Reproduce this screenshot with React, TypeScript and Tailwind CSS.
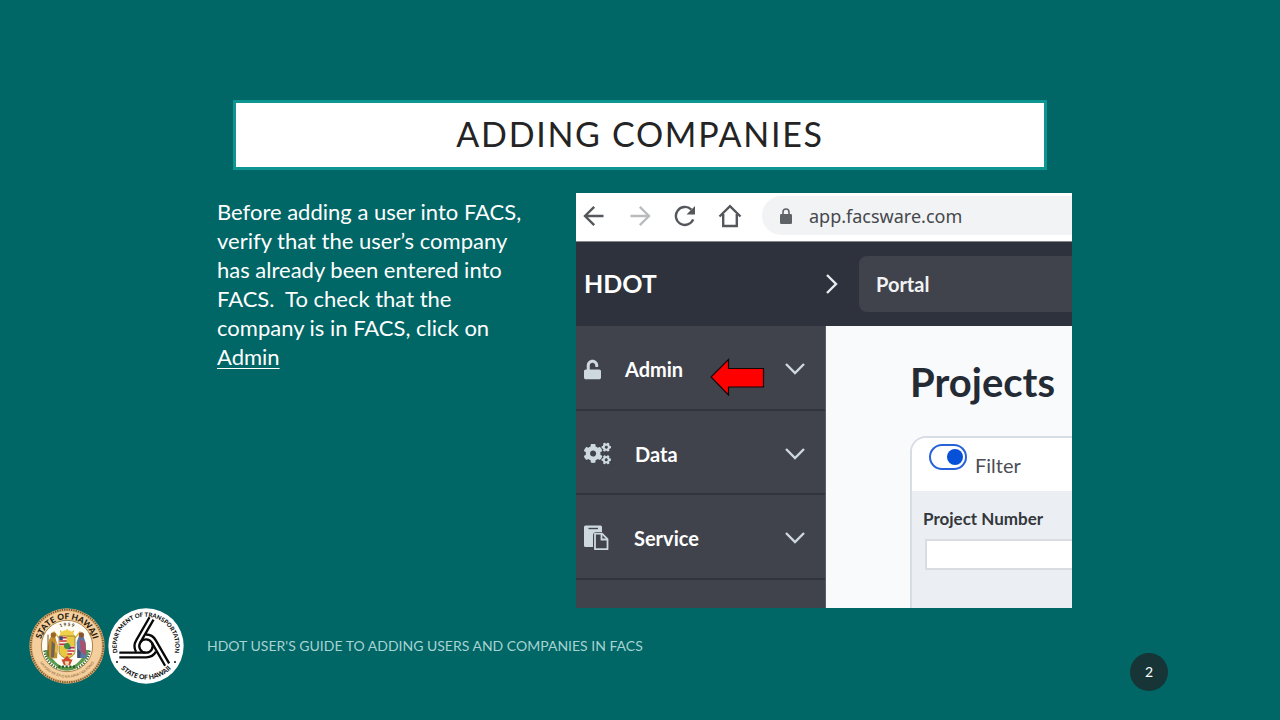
import React from "react";
import { FaCogs, FaUnlock } from "react-icons/fa";

function StateSeal() {
  return (
    <svg viewBox="0 0 228 228" className="size-[76px] shrink-0" role="img" aria-label="State of Hawaii seal">
      <defs>
        <path id="seal-top" d="M34 122A80.400 80.400 0 1 1 194 122" />
        <path id="seal-year" d="M54 114A60 60 0 0 1 174 114" />
        <path id="seal-bottom" d="M19 114A95 95 0 0 0 209 114" />
      </defs>
      <circle cx="114" cy="114" r="113" fill="#e3b67c" />
      <circle cx="114" cy="114" r="109" fill="none" stroke="#7d5a30" strokeWidth="6" strokeDasharray="4 3" />
      <circle cx="114" cy="114" r="104" fill="#f4cf9d" />
      <circle cx="114" cy="114" r="77" fill="#fffdf3" stroke="#a9824b" strokeWidth="3" />
      <text fontFamily="Lato, sans-serif" fontSize="25" fontWeight="900" fill="#2b1b0c" textAnchor="middle">
        <textPath href="#seal-top" startOffset="50%">STATE OF HAWAII</textPath>
      </text>
      <text fontFamily="Lato, sans-serif" fontSize="14" fontWeight="900" fill="#4a3a24" textAnchor="middle">
        <textPath href="#seal-year" startOffset="50%">1 9 5 9</textPath>
      </text>
      <text fontFamily="Lato, sans-serif" fontSize="11" fontWeight="700" fill="#a17b49" textAnchor="middle">
        <textPath href="#seal-bottom" startOffset="50%">UA MAU KE EA O KA AINA I KA PONO</textPath>
      </text>
      <path d="M114 84V64M102 84 94 68M126 84l8-16M90 90 74 70M138 90l16-20" stroke="#dfb93c" strokeWidth="4" />
      <path d="M92 84a22 18 0 0 1 44 0z" fill="#f2d14a" />
      <path d="M48 126c4 34 30 52 64 56-26-12-46-26-52-56z" fill="#5c9c50" />
      <path d="M180 126c-4 34-30 52-64 56 26-12 46-26 52-56z" fill="#5c9c50" />
      <path d="M46 128c4 28 20 44 38 52M182 128c-4 28-20 44-38 52" fill="none" stroke="#2d6532" strokeWidth="6" strokeDasharray="4 4" />
      <path d="M60 96l8-14 10 3 4 14 5 14-3 38H62l-6-30z" fill="#c28d2e" />
      <path d="M68 98l10 10-3 40h-9z" fill="#6a6653" />
      <path d="M80 100l6 12-3 24-5-4z" fill="#e6bd4a" />
      <circle cx="73" cy="81" r="8" fill="#9b642b" />
      <path d="M57 80v66" stroke="#755126" strokeWidth="3" />
      <path d="M143 102l8-20 12 2 7 20 3 46h-28z" fill="#5978a6" />
      <path d="M152 92l17 12 3 38-16-10z" fill="#a9516b" />
      <path d="M146 122l9 10-1 18h-9z" fill="#454f73" />
      <circle cx="157" cy="81" r="8" fill="#8a5630" />
      <path d="M90 84h48v46c0 12-14 18-24 24-10-6-24-12-24-24z" fill="#e8c83f" stroke="#79672c" strokeWidth="2" />
      <path d="M91 85h22v29H91z" fill="#f7efe0" />
      <path d="M91 89h22M91 99h22M91 109h22" stroke="#c5313b" strokeWidth="5" />
      <path d="M91 85h10v11H91z" fill="#324b85" />
      <path d="M115 115h22v16l-10 9h-12z" fill="#f7efe0" />
      <path d="M115 119h22M115 129h22M115 138h14" stroke="#c5313b" strokeWidth="5" />
      <path d="M115 115h10v9h-10z" fill="#324b85" />
      <circle cx="114" cy="114" r="9" fill="#3f8b46" />
      <path d="M97 154c9 4 12-8 17-10 5 2 8 14 17 10l-8 18h-18z" fill="#cf4a2c" />
      <path d="M107 160h14l-3 12h-8z" fill="#f0d9ae" />
      <path d="M80 167c20 13 48 13 68 0l-4 13c-18 11-42 11-60 0z" fill="#5e984b" />
      <path d="M88 176h52" stroke="#235a2c" strokeWidth="7" strokeDasharray="6 5" />
      <path d="M42 70l2 4 4 1-3 3v4l-3-2-4 2 1-4-3-3 4-1zM186 70l2 4 4 1-3 3v4l-3-2-4 2 1-4-3-3 4-1z" fill="#755c37" />
    </svg>
  );
}

function TransportationLogo() {
  const arm = (
    <>
      <path d="M34 148H114A34 34 0 0 0 144 131" />
      <path d="M34 134H114A20 20 0 0 0 132 105" />
    </>
  );
  return (
    <svg viewBox="0 0 228 228" className="size-[76px] shrink-0" role="img" aria-label="Department of Transportation logo">
      <defs>
        <path id="dot-top" d="M35 152A87.700 87.700 0 1 1 193 152" />
        <path id="dot-bottom" d="M18 147A102 102 0 0 0 210 147" />
      </defs>
      <circle cx="114" cy="114" r="113" fill="#fff" />
      <g fill="none" stroke="#090909" strokeWidth="7">
        <g>{arm}</g>
        <g transform="rotate(120 114 114)">{arm}</g>
        <g transform="rotate(240 114 114)">{arm}</g>
      </g>
      <text fontFamily="Lato, sans-serif" fontSize="18" fontWeight="900" fill="#111" textAnchor="middle">
        <textPath href="#dot-top" startOffset="50%">DEPARTMENT OF TRANSPORTATION</textPath>
      </text>
      <text fontFamily="Lato, sans-serif" fontSize="20" fontWeight="900" fill="#111" textAnchor="middle">
        <textPath href="#dot-bottom" startOffset="50%">STATE OF HAWAII</textPath>
      </text>
      <circle cx="27" cy="162" r="3" fill="#111" />
      <circle cx="201" cy="162" r="3" fill="#111" />
    </svg>
  );
}

function BackIcon() {
  return (
    <svg viewBox="0 0 22 22" className="size-[22px]" fill="none" stroke="currentColor" strokeWidth="2.4" aria-hidden="true">
      <path d="M20.500 11H2M11.200 1.800 2 11l9.200 9.200" />
    </svg>
  );
}

function ReloadIcon() {
  return (
    <svg viewBox="0 0 22 22" className="size-[22px]" aria-hidden="true">
      <path d="M19.200 14.400A9 9 0 1 1 17.300 4.600" fill="none" stroke="currentColor" strokeWidth="2.400" />
      <path d="M21 1v8.500h-8.500z" fill="currentColor" />
    </svg>
  );
}

function HomeIcon() {
  return (
    <svg viewBox="0 0 24 24" className="size-6" fill="none" stroke="currentColor" strokeWidth="2.400" aria-hidden="true">
      <path d="M1.500 12.500 12 2.200l10.500 10.300M5.200 10v12h13.600V10" />
    </svg>
  );
}

function LockIcon() {
  return (
    <svg viewBox="0 0 12 16" className="h-4 w-3 shrink-0 text-[#5f6368]" aria-hidden="true">
      <path d="M3 7V4a3 3 0 0 1 6 0v3" fill="none" stroke="currentColor" strokeWidth="1.600" />
      <rect y="6" width="12" height="10" rx="1.200" fill="currentColor" />
    </svg>
  );
}

function PasteIcon() {
  return (
    <svg viewBox="0 0 26 26" className="size-[26px]" aria-hidden="true">
      <path d="M1.500.5h15A1.500 1.500 0 0 1 18 2v5h-5.500A3.500 3.500 0 0 0 9 10.500V22H1.500A1.500 1.500 0 0 1 0 20.500V2A1.500 1.500 0 0 1 1.500.5z" fill="currentColor" />
      <path d="M4.500 3.500h9.500" stroke="#40434b" strokeWidth="1.400" />
      <path d="M11 8.700h7l5.500 5.500v10H11z" fill="#40434b" stroke="currentColor" strokeWidth="1.800" strokeLinejoin="round" />
      <path d="M17.500 9v5.500h6" fill="none" stroke="currentColor" strokeWidth="1.800" />
    </svg>
  );
}

function ChevronDown() {
  return (
    <svg viewBox="0 0 20 12" className="h-3 w-5" fill="none" stroke="currentColor" strokeWidth="2.400" aria-hidden="true">
      <path d="m1 1 9 9 9-9" />
    </svg>
  );
}

function MenuButton({ icon, label }: { icon: React.ReactNode; label: string }) {
  return (
    <button type="button" className="flex h-full w-full items-center gap-6 pt-[3px] pr-5 pl-2 text-left text-xl font-bold text-white">
      <span className="text-[#ced8df]">{icon}</span>
      <span>{label}</span>
      <span className="ml-auto text-[#ced8df]"><ChevronDown /></span>
    </button>
  );
}

function BrowserPanel() {
  return (
    <section className="flex min-w-0 flex-col overflow-hidden bg-white" aria-label="FACS application">
      <div className="flex h-[49px] items-center border-b border-[#85898b] pb-[3px] pl-[7px] text-[#54575b]">
        <button type="button" aria-label="Back"><BackIcon /></button>
        <button type="button" aria-label="Forward" className="ml-6 rotate-180 text-[#b9bbbe]"><BackIcon /></button>
        <button type="button" aria-label="Reload" className="ml-[23px]"><ReloadIcon /></button>
        <button type="button" aria-label="Home" className="ml-[22px]"><HomeIcon /></button>
        <div className="ml-5 flex h-[39px] min-w-0 flex-1 items-center rounded-l-full bg-[#f1f3f4] pl-[18px]">
          <LockIcon />
          <input
            aria-label="Address"
            defaultValue="app.facsware.com"
            className="ml-[17px] w-full min-w-0 bg-transparent font-['Noto_Sans',sans-serif] text-lg text-[#45484d] outline-none"
          />
        </div>
      </div>
      <div className="flex h-[84px] items-center bg-[#2d323c] pl-2 text-white">
        <span className="w-[242px] text-[25px] font-bold">HDOT</span>
        <svg viewBox="0 0 12 20" className="h-5 w-3 shrink-0" fill="none" stroke="#e8ecf0" strokeWidth="2.400" aria-hidden="true">
          <path d="m1 1 9 9-9 9" />
        </svg>
        <button type="button" className="ml-[21px] h-14 flex-1 rounded-l-lg bg-[#40434b] pl-[17px] text-left text-xl font-bold text-[#f2f3f4]">
          Portal
        </button>
      </div>
      <div className="flex flex-1">
        <nav className="w-[250px] shrink-0 border-r border-[#5b5e65] bg-[#40434b]" aria-label="Main menu">
          <ul>
            <li className="relative h-[85px] border-b-2 border-[#31343d]">
              <MenuButton icon={<FaUnlock className="h-[21px] w-[17px]" />} label="Admin" />
              <svg viewBox="0 0 56 38" className="absolute top-8 left-[134px] h-[38px] w-14" aria-hidden="true">
                <path d="M1 19 18.500 1.500v9H53.500v18.500H18.500v8z" fill="#f00" stroke="#160505" strokeWidth="1.200" />
              </svg>
            </li>
            <li className="h-[84px] border-b-2 border-[#31343d]">
              <MenuButton icon={<FaCogs className="size-[27px]" />} label="Data" />
            </li>
            <li className="h-[85px] border-b-2 border-[#31343d]">
              <MenuButton icon={<PasteIcon />} label="Service" />
            </li>
            <li className="h-7" />
          </ul>
        </nav>
        <div className="flex min-w-0 flex-1 flex-col bg-[#f9fafc] pt-8 pl-[84px]">
          <h2 className="text-[40px] leading-[48px] font-bold text-[#252b35]">Projects</h2>
          <div className="mt-[30px] flex-1 overflow-hidden rounded-tl-2xl border-t-2 border-l-2 border-[#d7dde5] bg-[#ebeff3]">
            <div className="flex h-[53px] items-center bg-white pb-1 pl-[17px]">
              <label className="flex items-center gap-2 text-xl text-[#4b4e54]">
                <span className="relative mb-3 h-[26px] w-[38px]">
                  <input
                    type="checkbox"
                    defaultChecked
                    className="block h-[26px] w-[38px] appearance-none rounded-full border-2 border-[#2862d9] bg-white"
                  />
                  <span className="pointer-events-none absolute top-[5px] right-1 size-4 rounded-full bg-[#0750d8]" />
                </span>
                <span className="mt-1">Filter</span>
              </label>
            </div>
            <div className="pt-4 pl-[11px]">
              <label htmlFor="project-number" className="block text-[17px] leading-6 font-bold text-[#34373c]">Project Number</label>
              <div className="mt-2 pl-[2px]">
                <input id="project-number" className="block h-[31px] w-full border-2 border-r-0 border-[#d9dde1] bg-white px-2" />
              </div>
            </div>
          </div>
        </div>
      </div>
    </section>
  );
}

export default function App() {
  return (
    <main className="flex min-h-screen flex-col bg-[#006666] pt-[100px] font-[Lato,sans-serif]">
      <h1 className="mx-[233px] flex h-[70px] items-center justify-center border-[3px] border-[#0d9691] bg-white pb-1 text-[34px] tracking-wider text-[#242424]">
        ADDING COMPANIES
      </h1>
      <div className="mt-[23px] mr-[208px] ml-[217px] grid grid-cols-[320px_minmax(0,1fr)] gap-[39px]">
        <p className="pt-1 text-[22px] leading-[29px] text-white">
          Before adding a user into FACS,<br />
          verify that the user’s company<br />
          has already been entered into<br />
          FACS.&nbsp; To check that the<br />
          company is in FACS, click on<br />
          <span className="underline decoration-1 underline-offset-3">Admin</span>
        </p>
        <BrowserPanel />
      </div>
      <footer className="flex items-start pr-28 pl-[29px]">
        <div className="flex gap-[3px]">
          <StateSeal />
          <TransportationLogo />
        </div>
        <p className="mt-7 ml-[23px] text-sm leading-5 text-[#a7d3d2]">
          HDOT USER'S GUIDE TO ADDING USERS AND COMPANIES IN FACS
        </p>
        <span className="mt-[45px] ml-auto flex size-[38px] items-center justify-center rounded-full bg-[#173536] text-sm text-white">2</span>
      </footer>
    </main>
  );
}
